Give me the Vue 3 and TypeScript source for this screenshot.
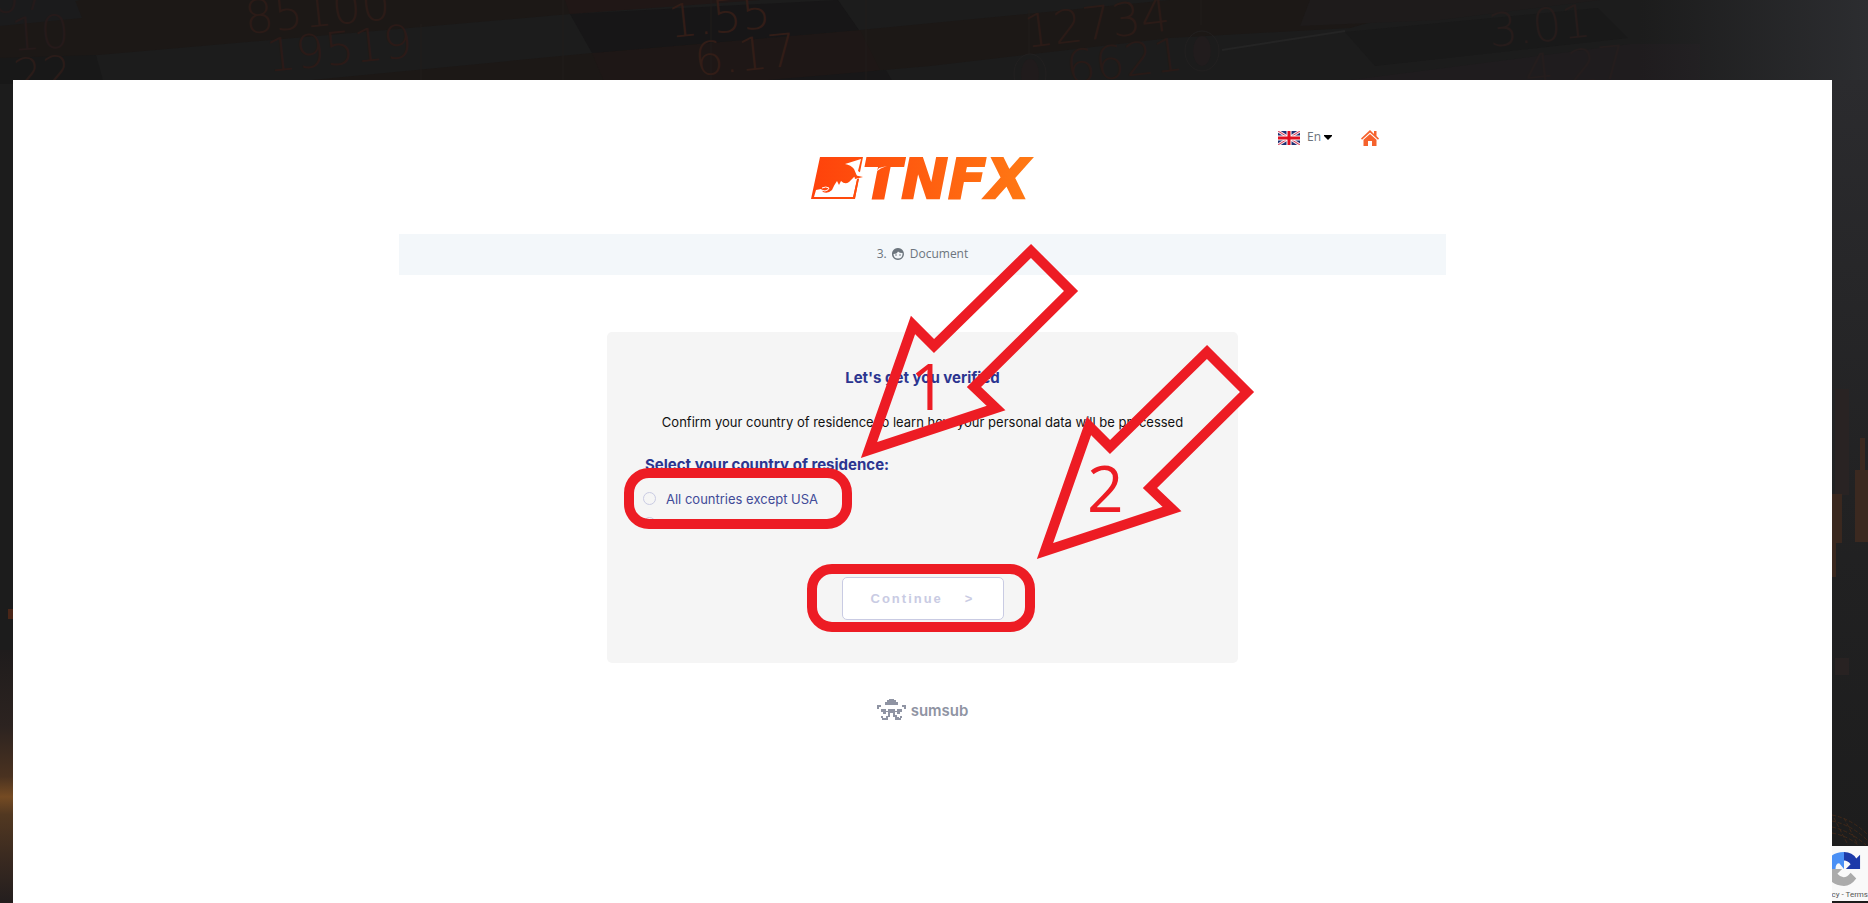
<script setup lang="ts">
import { ref } from 'vue'

interface Ticker {
  text: string
  x: number
  y: number
  angle: number
  tone: string
}

const country = ref<string>('')

const countries = [
  { id: 'all', label: 'All countries except USA' },
  { id: 'usa', label: 'USA' },
]

const tickers: Ticker[] = [
  { text: '07', x: -8, y: 14, angle: -6, tone: '#241a1a' },
  { text: '10', x: 12, y: 51, angle: -4, tone: '#251a1a' },
  { text: '22', x: 14, y: 92, angle: -4, tone: '#2a1c19' },
  { text: '85100', x: 246, y: 34, angle: -6, tone: '#2b1b17' },
  { text: '19519', x: 268, y: 72, angle: -6, tone: '#2b1a17' },
  { text: '1.55', x: 670, y: 38, angle: -6, tone: '#321d17' },
  { text: '6.17', x: 696, y: 76, angle: -6, tone: '#321d17' },
  { text: '12734', x: 1026, y: 48, angle: -7, tone: '#2b1b17' },
  { text: '6621', x: 1068, y: 84, angle: -7, tone: '#281a17' },
  { text: '3.01', x: 1490, y: 47, angle: -6, tone: '#261c1b' },
  { text: '4.27', x: 1526, y: 88, angle: -6, tone: '#241d1d' },
]

const arrowShape =
  'M262 118 L306 -7 L327 14 L424 -81 L464 -41 L367 55 L389 76 Z'
</script>

<template>
  <div class="page">
    <svg class="backdrop" viewBox="0 0 1868 903" preserveAspectRatio="none" aria-hidden="true">
      <defs>
        <linearGradient id="edge" x1="0" x2="1" y1="0" y2="0">
          <stop offset="0" stop-color="#2c2d30" stop-opacity="0" />
          <stop offset="1" stop-color="#2c2d30" />
        </linearGradient>
        <linearGradient id="edgeFade" x1="0" x2="0" y1="0" y2="1">
          <stop offset="0" stop-color="#2b2b2e" />
          <stop offset="0.5" stop-color="#222223" />
          <stop offset="1" stop-color="#1c1c1c" />
        </linearGradient>
        <linearGradient id="glow" x1="0" x2="0" y1="0" y2="1">
          <stop offset="0" stop-color="#1f1c1c" />
          <stop offset="0.3" stop-color="#2c2320" />
          <stop offset="0.5" stop-color="#4a3220" />
          <stop offset="0.58" stop-color="#754b23" />
          <stop offset="0.65" stop-color="#523821" />
          <stop offset="0.82" stop-color="#3a2a20" />
          <stop offset="1" stop-color="#231e1e" />
        </linearGradient>
      </defs>
      <rect width="1868" height="903" fill="#1c1c1c" />
      <path d="M80 0 H700 L570 14 L98 55 L0 62 V20 Z" fill="#1c1816" />
      <path d="M0 0 H75 L82 18 L0 26 Z" fill="#1b1b1c" />
      <path d="M0 58 L96 55 L104 84 H0 Z" fill="#181818" />
      <path d="M270 84 L592 53 L860 30 L1170 0 H1450 L1350 28 L1170 38 L930 66 L720 84 Z" fill="#1c1816" />
      <path d="M592 53 L860 30 L880 70 L780 84 H605 Z" fill="#1e1716" />
      <path d="M570 14 L838 0 L859 30 L592 53 Z" fill="#171617" />
      <path d="M565 0 H760 L570 14 Z" fill="#201716" />
      <path d="M720 84 L886 70 L894 84 Z" fill="#181718" />
      <path d="M1310 0 H1600 L1440 20 L1300 26 Z" fill="#1e1b1b" />
      <path d="M1345 32 L1598 8 L1628 38 L1375 66 Z" fill="#191919" />
      <path d="M1320 84 L1630 44 H1700 V84 Z" fill="#1f1c1e" />
      <path d="M1222 50 L1345 31" stroke="#242424" stroke-width="2" />
      <path d="M421 24 V80 M563 0 V80 M711 0 V80 M866 0 V80 M1201 0 V25 M1029 10 V55" stroke="#211d1b" />
      <ellipse cx="1202" cy="51" rx="17" ry="20" fill="none" stroke="#222020" />
      <ellipse cx="1202" cy="51" rx="9" ry="15" fill="#211c1d" />
      <ellipse cx="1030" cy="74" rx="16" ry="20" fill="none" stroke="#222020" />
      <ellipse cx="1030" cy="74" rx="9" ry="15" fill="#201b1c" />
      <g class="ticker">
        <text
          v-for="t in tickers"
          :key="t.text"
          :fill="t.tone"
          :transform="`translate(${t.x} ${t.y}) rotate(${t.angle})`"
        >{{ t.text }}</text>
      </g>
      <rect x="1640" width="228" height="84" fill="url(#edge)" />
      <rect x="1830" y="80" width="38" height="823" fill="url(#edgeFade)" />
      <rect x="1835" y="389" width="14" height="106" fill="#292323" />
      <path d="M1832 494 h10 v49 h-6 v34 h-4 Z" fill="#3a281f" />
      <path d="M1855 542 V470 h5 v-32 h5 v32 h3 v72 Z" fill="#3b2920" />
      <rect x="1835" y="658" width="14" height="17" fill="#282222" />
      <path d="M1832 815 q20 4 36 20 M1832 821 q20 4 36 20 M1832 827 q18 4 34 18 M1832 833 q16 3 26 12 M1834 818 l14 27 M1844 818 l14 27" fill="none" stroke="#3f2819" stroke-dasharray="4 2" />
      <rect y="650" width="14" height="253" fill="url(#glow)" />
      <rect x="8" y="609" width="6" height="10" fill="#4a2618" />
    </svg>

    <main class="sheet">
      <div class="content">
        <header class="top">
          <div class="tools">
            <button type="button" class="lang" aria-haspopup="listbox">
              <svg class="flag" viewBox="0 0 22 14" aria-hidden="true">
                <rect width="22" height="14" fill="#1d2f72" />
                <path d="M0 0 L22 14 M22 0 L0 14" stroke="#f3dfe4" stroke-width="3" />
                <path d="M0 0 L22 14 M22 0 L0 14" stroke="#d8405a" />
                <path d="M11 0 V14 M0 7 H22" stroke="#fff" stroke-width="5" />
                <path d="M11 0 V14 M0 7 H22" stroke="#e01020" stroke-width="3" />
              </svg>
              <span>En</span>
              <svg class="caret" viewBox="0 0 8 5" aria-hidden="true"><path d="M0 0 H8 V1 L4 5 L0 1 Z" /></svg>
            </button>
            <a class="home" href="#" aria-label="Home">
              <svg viewBox="0 0 18 16" aria-hidden="true">
                <path d="M9 0 L13 4 V1 H15.500 V6 L18 8.500 L17 9.800 L9 2.600 L1 9.800 L0 8.500 Z" />
                <path d="M9 4 L15.500 9.800 V16 H11 V11 H7 V16 H2.500 V9.800 Z" />
              </svg>
            </a>
          </div>
          <svg class="logo" viewBox="0 0 224 44" role="img" aria-label="TNFX">
            <defs>
              <linearGradient id="brand" gradientUnits="userSpaceOnUse" x1="0" x2="224" y1="0" y2="0">
                <stop offset="0" stop-color="#ff420b" />
                <stop offset="1" stop-color="#ff7a14" />
              </linearGradient>
            </defs>
            <path fill="url(#brand)" d="M9 1 H52 L49 16 L44 43 H0 Z" />
            <path
              fill="#fff"
              d="M34 8 L50 3 L47 15 L50 17 L48 22 L46 24 L42 41 H3 L5 34 L10 33 L12 36 Q17 38 21 34 Q23 29 26 25 L28 29 L30 25 Q34 29 38 26 L43 21 L46 20 L43 13 Q40 9 34 8 Z"
            />
            <path fill="url(#brand)" d="M43 19 L52 21 L44 23 Z M48 23 L46 23 L42 42 H44 Z" />
            <path d="M10 34 L14 35 Q18 34 18 32 Q15 30 11 32" fill="none" stroke="#fff" />
            <text x="52" y="42" class="brand" fill="url(#brand)" stroke="url(#brand)">TNFX</text>
            <path d="M65 16 Q69 12 76 10 L68 12 Z" fill="#fff" />
          </svg>
        </header>

        <nav class="step" aria-label="Step">
          <span>3.</span>
          <svg viewBox="0 0 12 12" aria-hidden="true">
            <path fill="#6c757d" fill-rule="evenodd" d="M6 0 A6 6 0 1 1 5.900 0 Z M1.500 6 Q5 6 6 3.500 Q7.500 5 10.500 5 Q10.800 10.500 6 10.500 Q1.800 10.500 1.500 6 Z" />
            <circle cx="4" cy="7" r="0.800" fill="#6c757d" />
            <circle cx="8" cy="7" r="0.800" fill="#6c757d" />
          </svg>
          <span>Document</span>
        </nav>

        <form class="card" @submit.prevent>
          <h1>Let's get you verified</h1>
          <p>Confirm your country of residence to learn how your personal data will be processed</p>
          <fieldset>
            <legend>Select your country of residence:</legend>
            <div class="options">
              <label v-for="c in countries" :key="c.id">
                <input v-model="country" type="radio" name="country" :value="c.id" />
                <span>{{ c.label }}</span>
              </label>
            </div>
          </fieldset>
          <button type="submit" class="continue"><span>Continue</span><span>&gt;</span></button>

          <svg class="marks" width="630" height="331" viewBox="0 0 630 331" aria-hidden="true">
            <g fill="none" stroke="#ed1c24" stroke-width="10" stroke-miterlimit="10">
              <rect x="22" y="141" width="218" height="51" rx="20" />
              <rect x="205" y="237" width="218" height="58" rx="20" />
              <path :d="arrowShape" />
              <path :d="arrowShape" transform="translate(176 101)" />
            </g>
            <text x="303" y="78">1</text>
            <text x="480" y="180">2</text>
          </svg>
        </form>

        <footer class="maker">
          <svg viewBox="0 0 29 22" aria-hidden="true">
            <path d="M12 0 H17 V1 H19 V3 H21 V6 H8 V3 H10 V1 H12 Z M0 6 H4 V8 H2 V10 H0 Z M25 6 H29 V10 H27 V8 H25 Z M4 10 H9 V12 H11 V10 H18 V12 H20 V10 H25 V13 H23 V15 H20 V13 H18 V16 H20 V18 H22 V20 H21 V21 H18 V18 H16 V14 H13 V18 H11 V21 H8 V19 H9 V17 H11 V13 H9 V15 H6 V13 H4 Z M4 17 H6 V19 H8 V21 H5 V19 H4 Z M23 17 H25 V19 H24 V21 H21 V19 H23 Z" />
          </svg>
          <span>sumsub</span>
        </footer>
      </div>
    </main>

    <aside class="captcha">
      <svg viewBox="0 0 36 36" aria-hidden="true">
        <path d="M18 0 V18 L13 12 Q9 12 9 18 H0 Q0 0 18 0 Z" fill="#4a90f5" />
        <path d="M18 0 Q27 0 31 7 L35 3 V18 H20 L25 13 Q22 9 18 9 Z" fill="#1c3aa9" />
        <path d="M0 18 H16 L11 23 Q18 31 25 22 L31 28 Q25 36 18 36 Q0 35 0 18 Z" fill="#ababab" />
      </svg>
      <div><a href="#">Privacy</a> - <a href="#">Terms</a></div>
    </aside>
  </div>
</template>

<style>
body {
  margin: 0;
  background: #1c1c1c;
}
</style>

<style scoped>
.page {
  position: relative;
  display: flex;
  box-sizing: border-box;
  min-height: 100vh;
  padding: 80px 36px 0 13px;
  overflow: hidden;
  font-family: Inter, "Liberation Sans", sans-serif;
}

.backdrop {
  position: absolute;
  inset: 0;
  width: 100%;
  height: 100%;
}

.ticker {
  font: 200 46px "DejaVu Sans", sans-serif;
}

.sheet {
  position: relative;
  flex: 1;
  background: #fff;
}

.content {
  width: 58%;
  min-width: 700px;
  max-width: 1047px;
  margin: 0 auto;
}

.top {
  display: flex;
  flex-direction: column;
  align-items: center;
  padding: 48px 0 34px;
}

.tools {
  display: flex;
  align-self: flex-end;
  align-items: center;
  gap: 29px;
  height: 20px;
  margin-right: 67px;
}

.lang {
  display: flex;
  align-items: center;
  gap: 7px;
  padding: 0;
  border: 0;
  background: none;
  color: #6c757d;
  font: 12px/14px "Open Sans", sans-serif;
}

.lang span {
  padding-bottom: 2px;
}

.flag {
  width: 22px;
  height: 14px;
}

.caret {
  width: 8px;
  height: 5px;
  margin: 0 0 2px -4px;
}

.home svg {
  display: block;
  width: 18px;
  height: 16px;
  fill: #f5622d;
}

.logo {
  width: 224px;
  height: 44px;
  margin-top: 8px;
  overflow: visible;
}

.brand {
  font: italic 700 56px "DejaVu Sans", sans-serif;
  stroke-width: 2px;
}

.step {
  display: flex;
  align-items: center;
  justify-content: center;
  height: 41px;
  background: #f3f7fa;
  color: #6c757d;
  font: 500 12px/14px "Open Sans", sans-serif;
}

.step span {
  padding-bottom: 2px;
}

.step svg {
  width: 12px;
  height: 12px;
  margin: 0 6px 2px 5px;
}

.card {
  position: relative;
  box-sizing: border-box;
  display: flex;
  flex-direction: column;
  width: 631px;
  margin: 57px auto 0;
  padding: 36px 38px 43px;
  border-radius: 5px;
  background: #f5f5f5;
}

h1,
legend {
  margin: 0;
  padding: 0;
  color: #2c3590;
  font-size: 15px;
  font-weight: 700;
  line-height: 20px;
}

h1 {
  text-align: center;
}

p {
  margin: 24px 0 23px;
  color: #111;
  font-size: 13px;
  line-height: 20px;
  text-align: center;
  white-space: nowrap;
}

fieldset {
  min-width: 0;
  margin: 0;
  padding: 0;
  border: 0;
}

.options {
  height: 38px;
  margin-left: -2px;
  padding-top: 11px;
  overflow: hidden;
}

label {
  display: flex;
  align-items: center;
  gap: 10px;
  height: 25px;
  color: #414b98;
  font-size: 13px;
}

input {
  box-sizing: border-box;
  flex: none;
  width: 13px;
  height: 13px;
  margin: 0;
  border: 1px solid #c9cbe3;
  border-radius: 50%;
  appearance: none;
}

input:checked {
  border: 4px solid #2c3590;
}

.continue {
  display: flex;
  align-self: center;
  align-items: center;
  justify-content: center;
  gap: 22px;
  width: 162px;
  height: 43px;
  margin-top: 53px;
  border: 1px solid #c9cbe3;
  border-radius: 5px;
  background: #fff;
  color: #c9cbe3;
  font: 700 13px "Liberation Sans", Arial, sans-serif;
  letter-spacing: 2px;
}

.marks {
  position: absolute;
  top: 0;
  left: 0;
  overflow: visible;
  pointer-events: none;
}

.marks text {
  fill: #ed1c24;
  font: 64px "Open Sans", sans-serif;
}

.maker {
  display: flex;
  align-items: center;
  justify-content: center;
  gap: 5px;
  margin-top: 35px;
  color: #8f94a3;
  font: 600 15px/22px Inter, sans-serif;
}

.maker span {
  padding-top: 2px;
}

.maker svg {
  width: 29px;
  height: 22px;
  fill: #8f94a3;
}

.captcha {
  position: absolute;
  right: 0;
  bottom: 2px;
  display: flex;
  flex-direction: column;
  align-items: flex-end;
  justify-content: space-between;
  box-sizing: border-box;
  width: 36px;
  height: 55px;
  padding: 6px 0 2px;
  overflow: hidden;
  background: #f9f9f9;
  color: #555;
  font: 8px Roboto, sans-serif;
  white-space: nowrap;
}

.captcha svg {
  flex: none;
  width: 34px;
  height: 34px;
  margin-right: 7px;
}

.captcha a {
  color: inherit;
  text-decoration: none;
}
</style>
